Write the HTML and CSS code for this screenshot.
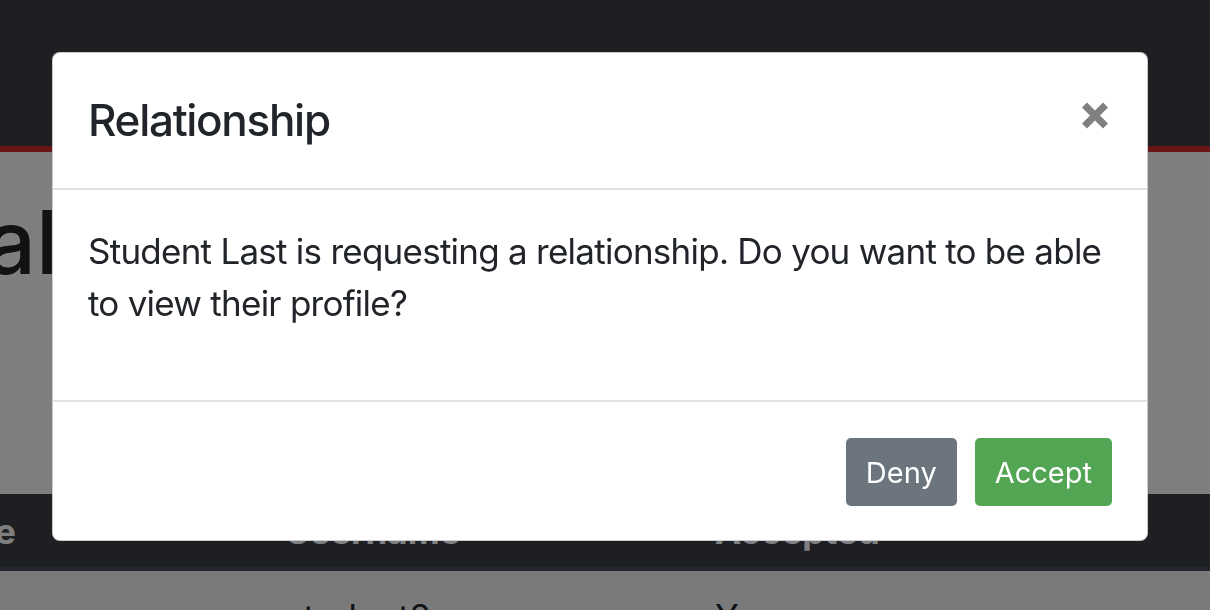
FILE: index.html
```html
<!DOCTYPE html>
<html lang="en">
<head>
<meta charset="utf-8">
<title>Relationship</title>
<link rel="stylesheet" href="styles.css">
</head>
<body>
<div class="page">
  <nav class="navbar"></nav>
  <main class="content">
    <h1 class="page-title">al</h1>
    <div class="table">
      <div class="thead">
        <div class="th">Name</div>
        <div class="th">Username</div>
        <div class="th">Accepted</div>
      </div>
      <div class="tr">
        <div class="td"></div>
        <div class="td">student2</div>
        <div class="td">Yes</div>
      </div>
    </div>
  </main>
</div>
<div class="backdrop"></div>
<div class="modal" role="dialog">
  <div class="modal-header">
    <h5 class="modal-title">Relationship</h5>
    <button class="close" aria-label="Close">
      <svg width="26" height="27" viewBox="0 0 26 27"><path d="M2.5 3L23.5 24M23.5 3L2.5 24" stroke="#808080" stroke-width="7" fill="none"/></svg>
    </button>
  </div>
  <div class="modal-body">
    <p>Student Last is requesting a relationship. Do you want to be able to view their profile?</p>
  </div>
  <div class="modal-footer">
    <button class="btn btn-secondary">Deny</button>
    <button class="btn btn-success">Accept</button>
  </div>
</div>
</body>
</html>
```
FILE: styles.css
```css
* { box-sizing: border-box; }
html, body { margin: 0; padding: 0; }
body {
  width: 1210px;
  height: 610px;
  overflow: hidden;
  background: #ffffff;
  font-family: Inter, "Noto Sans", sans-serif;
  color: #212529;
}
.page { width: 100%; }
.navbar {
  height: 152px;
  background: #3c3e46;
  border-bottom: 6px solid #d42c2c;
}
.content { padding-top: 38px; }
.page-title {
  margin: 0 0 0 -14px;
  font-size: 88px;
  line-height: 105px;
  font-weight: 500;
  color: #222428;
}
.table {
  margin-top: 199px;
  margin-left: -110px;
}
.thead, .tr {
  display: grid;
  grid-template-columns: 369px 430px 1fr;
}
.thead {
  background: #3c3e46;
  border-bottom: 4px solid #474d56;
  height: 77px;
  align-items: center;
}
.th {
  padding: 0 26px;
  font-size: 35px;
  font-weight: 700;
  color: #ffffff;
}
.tr { background: #f4f4f4; height: 80px; }
.td {
  padding: 20px 26px;
  font-size: 35px;
  line-height: 52px;
  color: #212529;
}
.backdrop {
  position: fixed;
  inset: 0;
  background: rgba(0, 0, 0, 0.5);
}
.modal {
  position: fixed;
  top: 52px;
  left: 52px;
  width: 1096px;
  background: #ffffff;
  border: 1px solid rgba(0, 0, 0, 0.2);
  border-radius: 8px;
  overflow: hidden;
}
.modal-header {
  display: flex;
  align-items: flex-start;
  justify-content: space-between;
  padding: 35px 35px 36px 35px;
  border-bottom: 2px solid #dee2e6;
}
.modal-title {
  margin: 0;
  font-size: 44px;
  line-height: 64px;
  font-weight: 500;
  letter-spacing: -1.3px;
  color: #212529;
}
.close {
  margin: 14px 4px 0 0;
  padding: 0;
  border: 0;
  background: transparent;
  display: flex;
  cursor: pointer;
}
.modal-body {
  padding: 35px 35px 35px 35px;
  border-bottom: 2px solid #dee2e6;
}
.modal-body p {
  margin: 0 0 36px 0;
  font-size: 35px;
  line-height: 52px;
  letter-spacing: -0.75px;
  color: #212529;
}
.modal-footer {
  display: flex;
  justify-content: flex-end;
  gap: 18px;
  padding: 36px 35px 34px 35px;
}
.btn {
  height: 68px;
  padding: 0 20px;
  border: 0;
  border-radius: 5px;
  font-family: Inter, "Noto Sans", sans-serif;
  font-size: 29px;
  color: #ffffff;
}
.btn-secondary { background: #6c757d; }
.btn-success { background: #52a552; }
```
